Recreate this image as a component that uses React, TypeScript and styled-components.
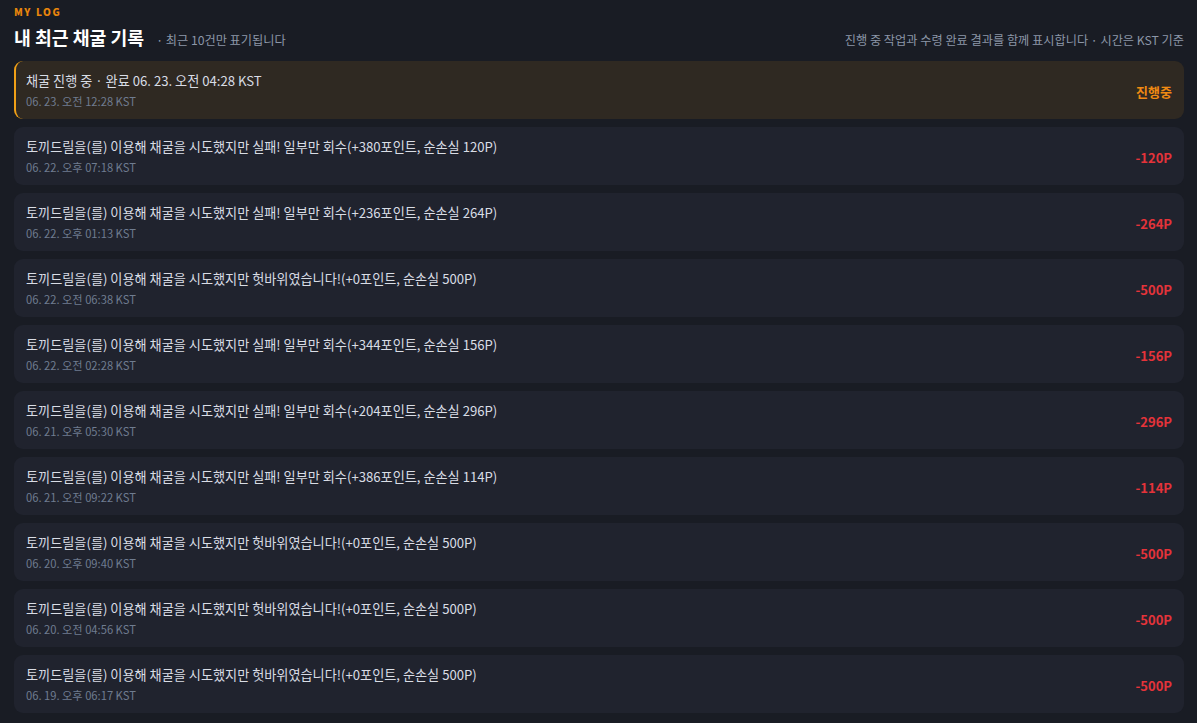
import React, { FC } from "react";
import styled, { createGlobalStyle } from "styled-components";

const GlobalStyle = createGlobalStyle`
  html, body {
    margin: 0;
    padding: 0;
    background: #191c24;
  }
  body {
    font-family: "Noto Sans CJK KR", "Noto Sans", sans-serif;
    color: #e4e7ee;
  }
`;

interface LogEntry {
  title: string;
  time: string;
  amount: string;
  pending?: boolean;
}

const logs: LogEntry[] = [
  {
    title: "채굴 진행 중 · 완료 06. 23. 오전 04:28 KST",
    time: "06. 23. 오전 12:28 KST",
    amount: "진행중",
    pending: true,
  },
  {
    title: "토끼드릴을(를) 이용해 채굴을 시도했지만 실패! 일부만 회수(+380포인트, 순손실 120P)",
    time: "06. 22. 오후 07:18 KST",
    amount: "-120P",
  },
  {
    title: "토끼드릴을(를) 이용해 채굴을 시도했지만 실패! 일부만 회수(+236포인트, 순손실 264P)",
    time: "06. 22. 오후 01:13 KST",
    amount: "-264P",
  },
  {
    title: "토끼드릴을(를) 이용해 채굴을 시도했지만 헛바위였습니다!(+0포인트, 순손실 500P)",
    time: "06. 22. 오전 06:38 KST",
    amount: "-500P",
  },
  {
    title: "토끼드릴을(를) 이용해 채굴을 시도했지만 실패! 일부만 회수(+344포인트, 순손실 156P)",
    time: "06. 22. 오전 02:28 KST",
    amount: "-156P",
  },
  {
    title: "토끼드릴을(를) 이용해 채굴을 시도했지만 실패! 일부만 회수(+204포인트, 순손실 296P)",
    time: "06. 21. 오후 05:30 KST",
    amount: "-296P",
  },
  {
    title: "토끼드릴을(를) 이용해 채굴을 시도했지만 실패! 일부만 회수(+386포인트, 순손실 114P)",
    time: "06. 21. 오전 09:22 KST",
    amount: "-114P",
  },
  {
    title: "토끼드릴을(를) 이용해 채굴을 시도했지만 헛바위였습니다!(+0포인트, 순손실 500P)",
    time: "06. 20. 오후 09:40 KST",
    amount: "-500P",
  },
  {
    title: "토끼드릴을(를) 이용해 채굴을 시도했지만 헛바위였습니다!(+0포인트, 순손실 500P)",
    time: "06. 20. 오전 04:56 KST",
    amount: "-500P",
  },
  {
    title: "토끼드릴을(를) 이용해 채굴을 시도했지만 헛바위였습니다!(+0포인트, 순손실 500P)",
    time: "06. 19. 오후 06:17 KST",
    amount: "-500P",
  },
];

export const LogSection = styled.section`
  padding: 5px 13px 10px 14px;
`;

export const Eyebrow = styled.div`
  font-size: 10px;
  font-weight: 800;
  letter-spacing: 1.6px;
  color: #e8850c;
  line-height: 14px;
`;

export const HeaderRow = styled.div`
  display: flex;
  align-items: baseline;
  justify-content: space-between;
  margin-top: 4px;
  margin-bottom: 10px;
`;

export const TitleGroup = styled.div`
  display: flex;
  align-items: baseline;
  gap: 12px;
`;

export const Title = styled.h2`
  margin: 0;
  font-size: 18.3px;
  font-weight: 700;
  color: #ffffff;
  line-height: 28px;
`;

export const Muted = styled.span`
  font-size: 12.2px;
  color: #8c97a8;
`;

export const List = styled.ul`
  list-style: none;
  margin: 0;
  padding: 0;
  display: flex;
  flex-direction: column;
  gap: 8px;
`;

export const Row = styled.li<{ $pending?: boolean }>`
  height: 58px;
  box-sizing: border-box;
  display: flex;
  align-items: center;
  justify-content: space-between;
  padding: 0 12px 0 ${(p) => (p.$pending ? "10px" : "12px")};
  border-radius: 9px;
  background: ${(p) => (p.$pending ? "#2f2922" : "#20232e")};
  border-left: ${(p) => (p.$pending ? "2px solid #f0a017" : "none")};
`;

export const RowText = styled.div`
  display: flex;
  flex-direction: column;
  gap: 3px;
`;

export const RowTitle = styled.div`
  font-size: 13.15px;
  color: #d9dde5;
  line-height: 19px;
`;

export const RowTime = styled.div`
  font-size: 11.2px;
  color: #6f7c90;
  line-height: 16px;
`;

export const Amount = styled.div<{ $pending?: boolean }>`
  font-size: 13px;
  font-weight: 700;
  color: ${(p) => (p.$pending ? "#f08a12" : "#e5333a")};
  margin-top: 2px;
`;

const LogRow: FC<{ entry: LogEntry }> = ({ entry }) => (
  <Row $pending={entry.pending}>
    <RowText>
      <RowTitle>{entry.title}</RowTitle>
      <RowTime>{entry.time}</RowTime>
    </RowText>
    <Amount $pending={entry.pending}>{entry.amount}</Amount>
  </Row>
);

const App: FC = () => {
  return (
    <>
      <GlobalStyle />
      <LogSection>
        <Eyebrow>MY LOG</Eyebrow>
        <HeaderRow>
          <TitleGroup>
            <Title>내 최근 채굴 기록</Title>
            <Muted>· 최근 10건만 표기됩니다</Muted>
          </TitleGroup>
          <Muted>진행 중 작업과 수령 완료 결과를 함께 표시합니다 · 시간은 KST 기준</Muted>
        </HeaderRow>
        <List>
          {logs.map((entry, i) => (
            <LogRow key={i} entry={entry} />
          ))}
        </List>
      </LogSection>
    </>
  );
};

export default App;
